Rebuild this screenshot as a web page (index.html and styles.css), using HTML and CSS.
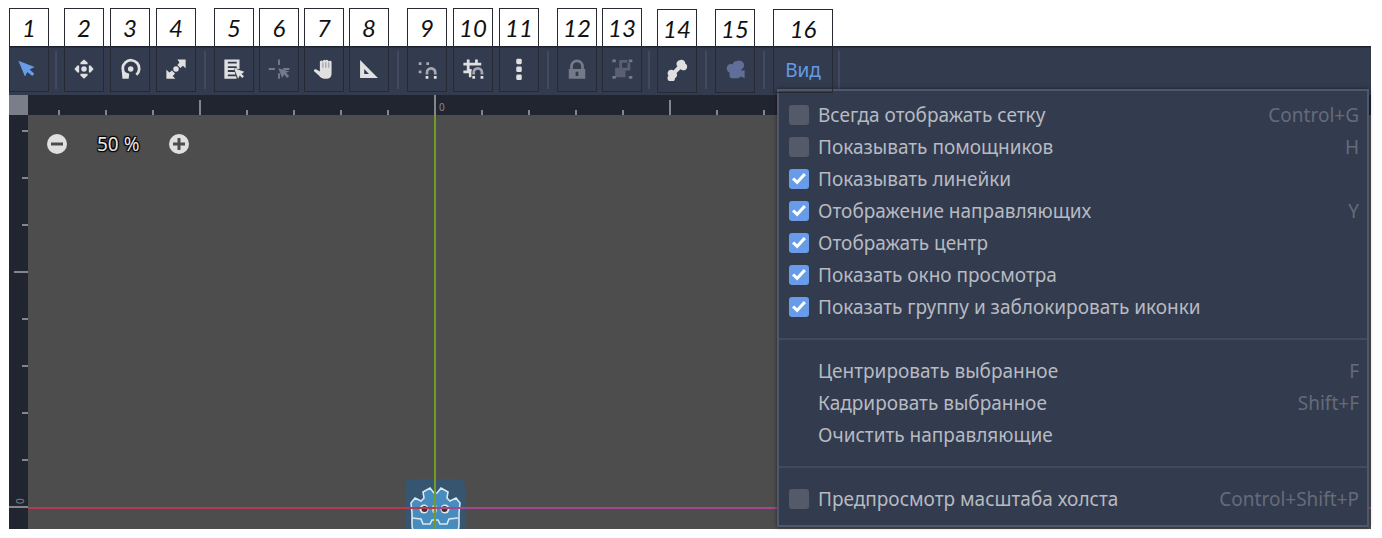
FILE: index.html
```html
<!DOCTYPE html>
<html lang="ru">
<head>
<meta charset="utf-8">
<title>Панель инструментов 2D</title>
<link rel="stylesheet" href="styles.css">
</head>
<body>
<main class="editor">
  <header class="toolbar">
    <div class="group">
      <div class="tool"><span class="num">1</span><button class="btn" aria-label="Выделение"><svg class="icon blue shift" viewBox="0 0 16 16"><path d="M1 2l4.800 11.500 1.700-3.400 3.600 3 1.500-1.700-3.400-3L12.800 6.500z"/></svg></button></div>
    </div>
    <span class="sep sep-tight"></span>
    <div class="group group-wide">
      <div class="tool"><span class="num">2</span><button class="btn" aria-label="Перемещение"><svg class="icon" viewBox="0 0 16 16"><circle cx="8" cy="8" r="2"/><path d="M8 1L5.400 3.200v1.300h5.200V3.200zM8 15l-2.600-2.200v-1.300h5.200v1.300zM1 8l2.200-2.600h1.300v5.200H3.200zM15 8l-2.200-2.600h-1.300v5.200h1.300z"/></svg></button></div>
      <div class="tool"><span class="num">3</span><button class="btn" aria-label="Поворот"><svg class="icon" viewBox="0 0 16 16"><circle cx="8.500" cy="8" r="2"/><path class="line" d="M4.400 11.800A6 6 0 1 1 12.600 12.200"/><path d="M2 9.500l5.500 2L7 15H2.500z"/></svg></button></div>
      <div class="tool"><span class="num">4</span><button class="btn" aria-label="Масштаб"><svg class="icon" viewBox="0 0 16 16"><circle cx="8" cy="8" r="2"/><path d="M9 1h6v6.500L13 5.600 11.200 7.300 9 5l1.500-1.700zM1 8.500V15h6.500L5.600 13l1.700-1.800L5 9l-1.700 1.500z"/></svg></button></div>
    </div>
    <span class="sep"></span>
    <div class="group">
      <div class="tool"><span class="num">5</span><button class="btn" aria-label="Список узлов"><svg class="icon" viewBox="0 0 16 16"><path fill-rule="evenodd" d="M1 1h11v7L8 7.600v1.200H3.500v1.400h5l.5 1.800H3.500v1.200h6l.5 1.800H1zM3.500 2.800v1.200h6.500V2.800zM3.500 6v1.200h6.500V6z"/><path d="M8 7.500l3 7.500 1.200-2.200L14 14.500l1.200-1.200-1.700-1.600L15.500 10z"/></svg></button></div>
      <div class="tool"><span class="num">6</span><button class="btn" aria-label="Точка вращения"><svg class="icon dim" viewBox="0 0 16 16"><path d="M7.300 1h1.400v4H7.300zM.5 7.300H5v1.400H.5zM11 7.300h4.500v1.400H11zM7.300 11h1.400v4H7.300zM7.500 7.500l2.800 7 1.400-2.500 2.300 2.500 1.400-1.200-2.300-2.500 2.500-1z"/></svg></button></div>
      <div class="tool"><span class="num">7</span><button class="btn" aria-label="Панорамирование"><svg class="icon" viewBox="0 0 16 16"><path d="M5 3.200a1 1 0 0 1 2-.5 1.200 1.200 0 0 1 2.200-.8 1.200 1.200 0 0 1 2.200.8 1.100 1.100 0 0 1 2.100.6V11c0 2.500-1 4-3.200 4H8c-1.600 0-2.700-1-3.700-2.200L.8 9.600C.2 8.600 1.400 7.800 2.500 8.300L5 9.800z"/><path class="cut" d="M7.200 3.200V7M9.300 3V7M11.400 3.200V7"/></svg></button></div>
      <div class="tool"><span class="num">8</span><button class="btn" aria-label="Линейка"><svg class="icon" viewBox="0 0 16 16"><path fill-rule="evenodd" d="M1.500 1.500v13h13zM4.500 8l3.500 3.700H4.500z"/></svg></button></div>
    </div>
    <span class="sep"></span>
    <div class="group group-wide">
      <div class="tool"><span class="num">9</span><button class="btn" aria-label="Умная привязка"><svg class="icon" viewBox="0 0 16 16"><path class="soft" d="M2 3h2v2H2zM7.500 3h2v2h-2zM2 9h2v2H2z"/><path class="line soft-line" d="M8 12v-1.500a3 3 0 0 1 6 0V12"/><path d="M7 13h2v2H7zM13 13h2v2h-2z"/></svg></button></div>
      <div class="tool"><span class="num">10</span><button class="btn" aria-label="Привязка к сетке"><svg class="icon" viewBox="0 0 16 16"><path d="M3.500 1h2v2.500h4V1h2v2.500H14v2H5.500V8H7v6H5v-3H1V9h2.500V5.500H1v-2h2.500z"/><path class="halo" d="M9 15v-4.500a2.500 2.500 0 0 1 5 0V15"/><path class="line soft-line" d="M8.500 12v-1.500a3 3 0 0 1 6 0V12"/><path d="M7.500 13h2v2h-2zM13.500 13h2v2h-2z"/></svg></button></div>
      <div class="tool"><span class="num">11</span><button class="btn" aria-label="Параметры привязки"><svg class="icon" viewBox="0 0 16 16"><rect x="6" y=".500" width="4" height="4" rx="1"/><rect x="6" y="6.200" width="4" height="4" rx="1"/><rect x="6" y="12" width="4" height="4" rx="1"/></svg></button></div>
    </div>
    <span class="sep"></span>
    <div class="group">
      <div class="tool"><span class="num">12</span><button class="btn" aria-label="Заблокировать"><svg class="icon dim" viewBox="0 0 16 16"><path fill-rule="evenodd" d="M8 1a5 5 0 0 0-5 5v2H2v7h12V8h-1V6a5 5 0 0 0-5-5zm0 2a3 3 0 0 1 3 3v2H5V6a3 3 0 0 1 3-3zM7 10h2v3H7z"/></svg></button></div>
      <div class="tool"><span class="num">13</span><button class="btn" aria-label="Сгруппировать"><svg class="icon dim" viewBox="0 0 16 16"><path d="M1 1h2.500v2H1zM13 1h2.500v2H13zM1 13h2.500v2H1zM13 13h2.500v2H13z"/><path class="faint" fill-rule="evenodd" d="M6 1.500h6v2h2V9h-3.500v5H3V7h3zM8 3.500V7h4V3.500z"/></svg></button></div>
    </div>
    <span class="sep sep-tight"></span>
    <div class="group group-low">
      <div class="tool"><span class="num">14</span><button class="btn" aria-label="Кости"><svg class="icon bone" viewBox="0 0 16 16"><path d="M10.500 1.200a2.200 2.200 0 0 1 3 2.300 2.200 2.200 0 1 1-2.800 3L7 10.200a2.200 2.200 0 0 1-1 3.500 2.200 2.200 0 1 1-3.500-1.500A2.200 2.200 0 1 1 5.500 9L9 5.300a2.300 2.300 0 0 1 1.500-4.100z"/></svg></button></div>
    </div>
    <span class="sep"></span>
    <div class="group group-low">
      <div class="tool"><span class="num">15</span><button class="btn" aria-label="Камера"><svg class="icon camera" viewBox="0 0 16 16"><path d="M9.500 1.500a3.300 3.300 0 0 0-3.200 2.300A3 3 0 1 0 4 9.800V12a2 2 0 0 0 2 2h4a2 2 0 0 0 2-1.500l3 1.500V8l-2.200.8V7.500a3.300 3.300 0 0 0-3.300-6z"/></svg></button></div>
    </div>
    <span class="sep"></span>
    <div class="group group-low">
      <div class="tool tool-view"><span class="num">16</span><button class="btn btn-text">Вид</button></div>
    </div>
    <span class="sep sep-last"></span>
  </header>

  <section class="workspace">
    <div class="corner"></div>
    <svg class="ruler">
      <defs>
        <pattern id="tx" width="47" height="20" x="30" patternUnits="userSpaceOnUse"><rect y="15" width="2" height="5"/></pattern>
        <pattern id="tX" width="235" height="20" x="171" patternUnits="userSpaceOnUse"><rect y="5" width="2" height="15"/></pattern>
      </defs>
      <rect width="100%" height="20" fill="url(#tx)"/><rect width="100%" height="20" fill="url(#tX)"/>
      <rect x="406" width="2" height="20"/><text x="411" y="16">0</text>
    </svg>
    <svg class="ruler">
      <defs>
        <pattern id="ty" width="19" height="47" y="15" patternUnits="userSpaceOnUse"><rect x="13" width="6" height="2"/></pattern>
      </defs>
      <rect width="19" height="100%" fill="url(#ty)"/>
      <rect x="5" y="156" width="14" height="2"/><rect y="391" width="19" height="2"/>
      <text transform="translate(15 389) rotate(-90)">0</text>
    </svg>
    <div class="canvas">
      <svg class="sprite" viewBox="0 0 60 60">
        <rect width="60" height="60" rx="6" fill="#355570"/>
        <path d="M15 60c-6-4-8-9-8-15v-11l-1-10 4-5 6 3 3-3-1-6 7-4 4 5h3l4-5 7 4-1 6 3 3 6-3 4 5-1 10v11c0 6-2 11-8 15z" fill="#478cbf" stroke="#d9e6ef" stroke-width="1.600"/>
        <path d="M7 39l9 1 2 5h7l2-4h6l2 4h7l2-5 9-1" fill="none" stroke="#d9e6ef" stroke-width="1.600"/>
        <circle cx="19" cy="30" r="4.500" fill="#e6e6e6"/><circle cx="40" cy="30" r="4.500" fill="#e6e6e6"/>
        <circle cx="19.500" cy="30" r="3" fill="#41302c"/><circle cx="39.500" cy="30" r="3" fill="#41302c"/>
        <rect x="27" y="26" width="5" height="8" rx="2" fill="#b9c4c9"/>
      </svg>
      <div class="axis-y"></div>
      <div class="axis-x"></div>
      <div class="zoom">
        <button class="zoom-btn" aria-label="Отдалить"><svg viewBox="0 0 20 20"><circle cx="10" cy="10" r="10"/><path d="M4 10h12"/></svg></button>
        <span class="zoom-value">50 %</span>
        <button class="zoom-btn" aria-label="Приблизить"><svg viewBox="0 0 20 20"><circle cx="10" cy="10" r="10"/><path d="M4 10h12M10 4v12"/></svg></button>
      </div>
    </div>
  </section>

  <div class="menu">
    <label class="item"><input type="checkbox" class="check"><span>Всегда отображать сетку</span><kbd>Control+G</kbd></label>
    <label class="item"><input type="checkbox" class="check"><span>Показывать помощников</span><kbd>H</kbd></label>
    <label class="item"><input type="checkbox" class="check" checked><span>Показывать линейки</span></label>
    <label class="item"><input type="checkbox" class="check" checked><span>Отображение направляющих</span><kbd>Y</kbd></label>
    <label class="item"><input type="checkbox" class="check" checked><span>Отображать центр</span></label>
    <label class="item"><input type="checkbox" class="check" checked><span>Показать окно просмотра</span></label>
    <label class="item"><input type="checkbox" class="check" checked><span>Показать группу и заблокировать иконки</span></label>
    <hr class="divider">
    <button class="item item-plain"><span>Центрировать выбранное</span><kbd>F</kbd></button>
    <button class="item item-plain"><span>Кадрировать выбранное</span><kbd>Shift+F</kbd></button>
    <button class="item item-plain"><span>Очистить направляющие</span></button>
    <hr class="divider">
    <label class="item"><input type="checkbox" class="check"><span>Предпросмотр масштаба холста</span><kbd>Control+Shift+P</kbd></label>
  </div>
</main>
</body>
</html>
```
FILE: styles.css
```css
* { box-sizing: border-box; }

body {
  margin: 0;
  min-height: 100vh;
  padding: 8px 11px 9px 9px;
  display: flex;
  background: #fff;
  font-family: "Noto Sans", "Open Sans", sans-serif;
  font-size: 19px;
}

button {
  margin: 0;
  padding: 0;
  border: 0;
  background: none;
  color: inherit;
  font: inherit;
}

.editor {
  position: relative;
  flex: 1;
  display: flex;
  flex-direction: column;
}

/* Toolbar: numbered captions sit above the dark strip */
.toolbar {
  display: flex;
  height: 87px;
  background: linear-gradient(#fff 38px, #1c2130 38px, #1c2130 39px, #333b4f 40px);
}

.group { display: flex; gap: 5px; }
.group-wide { gap: 6px; }
.group-low { padding-top: 1px; }

.tool {
  position: relative;
  z-index: 2;
  width: 40px;
  height: 84px;
  border: 1px solid #272a33;
  display: flex;
  flex-direction: column;
}
.tool-view { width: 60px; }

.num {
  height: 38px;
  color: #111;
  font: italic 400 24px/38px Lato, sans-serif;
  text-align: center;
}

.btn {
  flex: 1;
  display: flex;
  align-items: center;
  justify-content: center;
}
.btn-text { color: #639be8; }

.icon { width: 22px; height: 22px; fill: #e0e0e0; }
.icon .line { fill: none; stroke: #e0e0e0; stroke-width: 2; }
.icon .soft { fill: #a4a8b2; }
.icon .soft-line { stroke: #a4a8b2; }
.icon .cut { fill: none; stroke: #a4a8b2; stroke-width: 1; }
.icon .halo { fill: #333b4f; stroke: #333b4f; stroke-width: 4; }
.icon .faint { opacity: 0.6; }
.blue { fill: #699ce8; }
.dim { fill: #757a88; }
.camera { fill: #5f6f99; }
.bone { stroke: #e0e0e0; stroke-width: 1; }
.shift { margin-right: 2px; }

.sep {
  width: 2px;
  height: 38px;
  margin: 43px 8px 0;
  background: #424a5e;
}
.sep-tight { margin: 43px 7px 0 6px; }
.sep-last { margin: 43px 0 0 5px; }

.workspace {
  flex: 1;
  display: grid;
  grid-template: 20px 1fr / 19px 1fr;
}

.corner { background: #7b7e89; }

.ruler {
  width: 100%;
  height: 100%;
  background: #212530;
  fill: #83868f;
  font-size: 10px;
}

.canvas {
  position: relative;
  overflow: hidden;
  background: #4d4d4d;
}

.axis-y {
  position: absolute;
  left: 406px;
  top: 0;
  bottom: 0;
  width: 2px;
  background: #719d26;
}

.axis-x {
  position: absolute;
  left: 0;
  right: 0;
  top: 392px;
  height: 2px;
  background: linear-gradient(90deg, #b9384f 407px, #a3478f 407px);
}

.sprite {
  position: absolute;
  left: 377px;
  top: 364px;
  width: 60px;
  height: 60px;
}

.zoom {
  display: flex;
  align-items: center;
  gap: 30px;
  padding: 14px 19px;
}

.zoom-btn { width: 20px; height: 30px; display: flex; align-items: center; }
.zoom-btn svg { width: 20px; height: 20px; fill: #e0e0e0; }
.zoom-btn path { stroke: #4d4d4d; stroke-width: 3; }

.zoom-value {
  color: #e6e6e6;
  line-height: 30px;
  white-space: nowrap;
  text-shadow: 1px 1px 1px #000, -1px -1px 1px #000, 1px -1px 1px #000, -1px 1px 1px #000;
}

.menu {
  position: absolute;
  z-index: 1;
  left: 768px;
  right: 2px;
  top: 81px;
  padding: 8px 8px 10px 10px;
  border: 2px solid #4f576a;
  background: #333b4e;
  box-shadow: 0 0 4px rgba(0, 0, 0, 0.5);
  color: #b7bac2;
}

.item {
  display: flex;
  align-items: center;
  gap: 9px;
  width: 100%;
  height: 32px;
  white-space: nowrap;
}
.item-plain { padding-left: 29px; }

.item kbd {
  margin-left: auto;
  color: #656b7b;
  font: inherit;
}

.check {
  appearance: none;
  flex: none;
  display: grid;
  place-items: center;
  width: 20px;
  height: 20px;
  margin: 0;
  border-radius: 3px;
  background: #545a6a;
}
.check:checked { background: #699ce8; }
.check:checked::before {
  content: "";
  width: 14px;
  height: 12px;
  background: #fff;
  clip-path: polygon(0 55%, 15% 38%, 36% 60%, 84% 0, 100% 16%, 37% 96%);
}

.divider {
  height: 2px;
  margin: 15px -8px 15px -10px;
  border: 0;
  background: #424a5d;
}
```
